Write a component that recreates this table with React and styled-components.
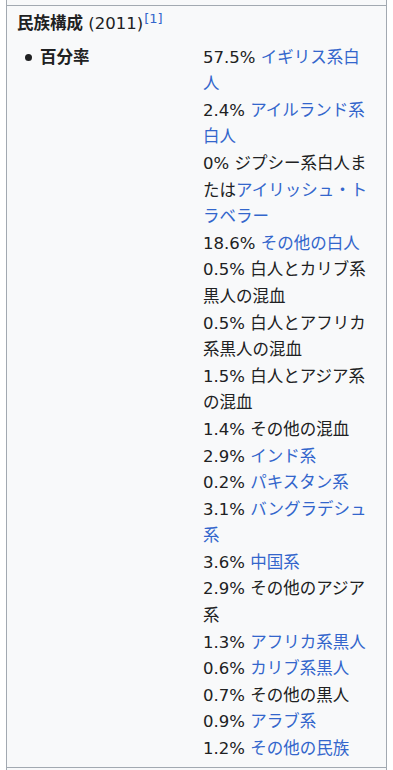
import React from "react";
import styled, { createGlobalStyle } from "styled-components";

const GlobalStyle = createGlobalStyle`
  body {
    margin: 0;
    background: #ffffff;
    color: #202122;
    font-family: "DejaVu Sans", "Noto Sans CJK JP", sans-serif;
  }
`;

// each entry: list of [text, isLink]
const entries = [
  [["57.5% "], ["イギリス系白人", true]],
  [["2.4% "], ["アイルランド系白人", true]],
  [["0% ジプシー系白人または"], ["アイリッシュ・トラベラー", true]],
  [["18.6% "], ["その他の白人", true]],
  [["0.5% 白人とカリブ系黒人の混血"]],
  [["0.5% 白人とアフリカ系黒人の混血"]],
  [["1.5% 白人とアジア系の混血"]],
  [["1.4% その他の混血"]],
  [["2.9% "], ["インド系", true]],
  [["0.2% "], ["パキスタン系", true]],
  [["3.1% "], ["バングラデシュ系", true]],
  [["3.6% "], ["中国系", true]],
  [["2.9% その他のアジア系"]],
  [["1.3% "], ["アフリカ系黒人", true]],
  [["0.6% "], ["カリブ系黒人", true]],
  [["0.7% その他の黒人"]],
  [["0.9% "], ["アラブ系", true]],
  [["1.2% "], ["その他の民族", true]],
];

const App = () => {
  return (
    <>
      <GlobalStyle />
      <Infobox>
        <PrevRow />
        <Section>
          <Header>
            <Bold>民族構成</Bold> (2011)<Ref href="#">[1]</Ref>
          </Header>
          <DataRow>
            <Label>
              <Dot />
              百分率
            </Label>
            <Values>
              {entries.map((parts, i) => (
                <Entry key={i}>
                  {parts.map(([text, link], j) =>
                    link ? <Link key={j} href="#">{text}</Link> : <span key={j}>{text}</span>
                  )}
                </Entry>
              ))}
            </Values>
          </DataRow>
        </Section>
        <NextRow />
      </Infobox>
    </>
  );
};

const Infobox = styled.div`
  margin-left: 6px;
  width: 381px;
  box-sizing: border-box;
  border-left: 1px solid #a2a9b1;
  border-right: 1px solid #a2a9b1;
  background-color: #f8f9fa;
  font-size: 16.5px;
`;

const PrevRow = styled.div`
  height: 5px;
`;

const Section = styled.div`
  border-top: 1px solid #a2a9b1;
  padding: 5px 12px 4px 10px;
`;

const NextRow = styled.div`
  height: 3px;
  border-top: 1px solid #a2a9b1;
`;

const Header = styled.div`
  line-height: 26.6px;
`;

const Bold = styled.span`
  font-weight: 700;
`;

const Ref = styled.a`
  color: #3366cc;
  text-decoration: none;
  font-size: 13px;
  line-height: 0;
  vertical-align: super;
  margin-left: 1px;
`;

const DataRow = styled.div`
  display: grid;
  grid-template-columns: 186px 169px;
  margin-top: 7px;
  line-height: 26.6px;
`;

const Label = styled.div`
  display: flex;
  align-items: center;
  align-self: start;
  height: 26.6px;
  padding-left: 8px;
  font-weight: 700;
`;

const Dot = styled.span`
  width: 7px;
  height: 7px;
  border-radius: 50%;
  background-color: #202122;
  margin-right: 8px;
`;

const Values = styled.div`
  display: flex;
  flex-direction: column;
`;

const Entry = styled.div`
  color: #202122;
`;

const Link = styled.a`
  color: #3366cc;
  text-decoration: none;
`;

export default App;
